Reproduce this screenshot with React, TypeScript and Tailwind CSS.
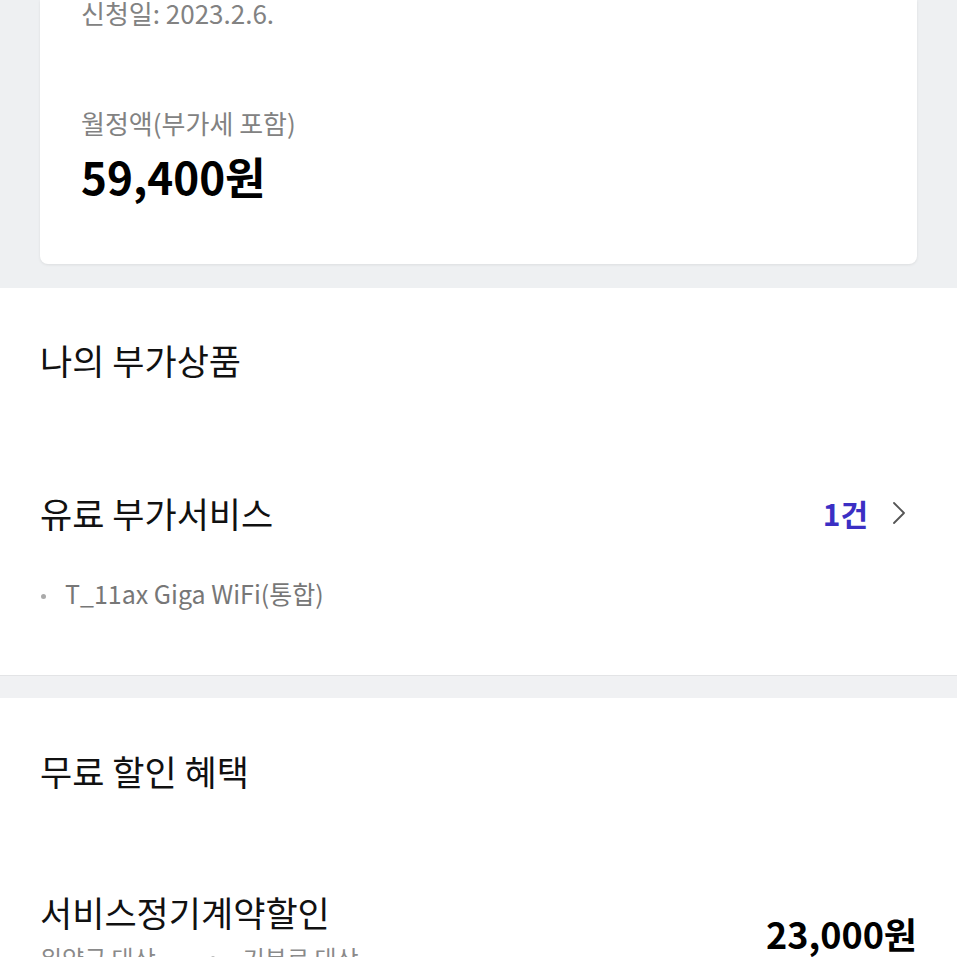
export default function App() {
  return (
    <div className="w-[957px] h-[957px] overflow-hidden bg-white font-['Noto_Sans_CJK_KR','Noto_Sans',sans-serif] text-[#111]">
      {/* plan summary card */}
      <section className="bg-[#eef0f2] px-10 pb-6">
        <div className="bg-white rounded-b-lg shadow-[0_1px_3px_rgba(0,0,0,0.08)] px-[41px] pb-[60px] h-[264px]">
          <p className="text-[26px] leading-[26px] text-[#828282]">신청일: 2023.2.6.</p>
          <p className="mt-[84px] text-[26px] leading-[26px] text-[#828282]">월정액(부가세 포함)</p>
          <p className="mt-[10px] text-[44px] leading-[60px] font-bold text-black">59,400원</p>
        </div>
      </section>

      {/* my add-ons */}
      <section className="px-10 pt-[52px] pb-[66px]">
        <h2 className="text-[35px] leading-[40px]">나의 부가상품</h2>
        <div className="mt-[113px] flex items-center justify-between">
          <h3 className="text-[35px] leading-[40px]">유료 부가서비스</h3>
          <div className="flex items-center gap-[24px]">
            <span className="text-[30px] leading-[40px] font-bold text-[#3b2fc4]">1건</span>
            <svg width="14" height="24" viewBox="0 0 14 24" fill="none" className="mr-[11px]">
              <polyline points="2,2 12,12 2,22" stroke="#555" strokeWidth="1.8" strokeLinecap="round" strokeLinejoin="round" />
            </svg>
          </div>
        </div>
        <ul className="mt-[44px]">
          <li className="flex items-center text-[25px] leading-[32px] text-[#777]">
            <span className="ml-[1px] mr-[19px] mt-[6px] w-[5px] h-[5px] rounded-full bg-[#aaa]" />
            T_11ax Giga WiFi(통합)
          </li>
        </ul>
      </section>

      <div className="h-[23px] bg-[#f0f1f3] border-t border-[#e3e4e6]" />

      {/* free discounts */}
      <section className="px-10 pt-[53px]">
        <h2 className="text-[35px] leading-[40px]">무료 할인 혜택</h2>
        <div className="mt-[101px] flex items-center justify-between">
          <div className="flex flex-col gap-[10px]">
            <span className="text-[35px] leading-[40px]">서비스정기계약할인</span>
            <span className="flex items-center text-[24px] leading-[32px] text-[#8a8a8a]">
              위약금 대상
              <span className="ml-[55px] mr-[28px] w-[4px] h-[4px] rounded-full bg-[#bbb]" />
              기본료 대상
            </span>
          </div>
          <span className="text-[36px] leading-[44px] font-bold text-black">23,000원</span>
        </div>
      </section>
    </div>
  );
}
